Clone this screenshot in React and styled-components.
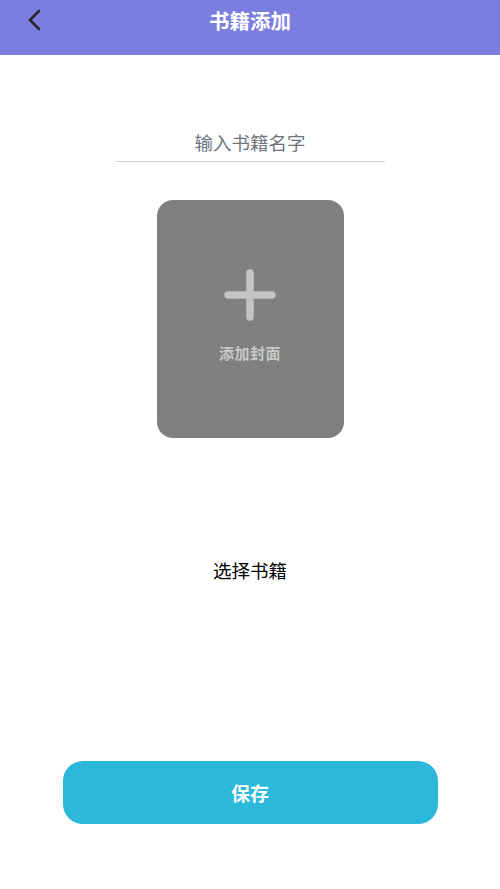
import styled, { createGlobalStyle } from "styled-components";

const GlobalStyle = createGlobalStyle`
  html, body {
    margin: 0;
    padding: 0;
    background: #fff;
    font-family: "Noto Sans CJK SC", "Noto Sans", sans-serif;
  }
`;

function App() {
  return (
    <Page>
      <GlobalStyle />
      <Header>
        <BackButton aria-label="back">
          <svg width="16" height="24" viewBox="0 0 16 24" fill="none">
            <path
              d="M13 3L4 12L13 21"
              stroke="#2a2a2a"
              strokeWidth="2.6"
              strokeLinecap="round"
              strokeLinejoin="round"
            />
          </svg>
        </BackButton>
        <Title>书籍添加</Title>
      </Header>

      <Body>
        <NameInput placeholder="输入书籍名字" />

        <Cover>
          <svg width="52" height="52" viewBox="0 0 52 52">
            <path
              d="M26 4V48M4 26H48"
              stroke="#c4c4c4"
              strokeWidth="7.5"
              strokeLinecap="round"
            />
          </svg>
          <CoverLabel>添加封面</CoverLabel>
        </Cover>

        <PickBook>选择书籍</PickBook>
      </Body>

      <SaveButton>保存</SaveButton>
    </Page>
  );
}

const Page = styled.div`
  width: 500px;
  height: 889px;
  display: flex;
  flex-direction: column;
  background: #fff;
`;

const Header = styled.div`
  position: relative;
  height: 55px;
  background: #7b7ddf;
  display: flex;
  align-items: flex-start;
  justify-content: center;
`;

const BackButton = styled.button`
  position: absolute;
  left: 26px;
  top: 8px;
  padding: 0;
  border: none;
  background: none;
  display: flex;
`;

const Title = styled.div`
  margin-top: 6px;
  color: #fff;
  font-size: 20.5px;
  font-weight: 700;
  line-height: 28px;
`;

const Body = styled.div`
  display: flex;
  flex-direction: column;
  align-items: center;
  padding-top: 73px;
  flex: 1;
`;

const NameInput = styled.input`
  width: 270px;
  height: 34px;
  box-sizing: border-box;
  border: none;
  border-bottom: 1px solid #d4d4d4;
  outline: none;
  text-align: center;
  font-family: inherit;
  font-size: 18.5px;
  padding: 0 0 6px;
  color: #333;
  &::placeholder {
    color: #6e737b;
  }
`;

const Cover = styled.div`
  margin-top: 38px;
  width: 187px;
  height: 238px;
  border-radius: 16px;
  background: #808080;
  display: flex;
  flex-direction: column;
  align-items: center;
  padding-top: 69px;
  box-sizing: border-box;
`;

const CoverLabel = styled.div`
  margin-top: 22px;
  color: #c8c8c8;
  font-size: 15px;
  font-weight: 700;
  letter-spacing: 0.5px;
  line-height: 20px;
`;

const PickBook = styled.div`
  margin-top: 119px;
  font-size: 18.5px;
  line-height: 26px;
  color: #000;
`;

const SaveButton = styled.button`
  align-self: center;
  margin-bottom: 65px;
  width: 375px;
  height: 63px;
  border: none;
  border-radius: 20px;
  background: #2bb8db;
  color: #fff;
  font-family: inherit;
  font-size: 19px;
  font-weight: 700;
`;

export default App;
